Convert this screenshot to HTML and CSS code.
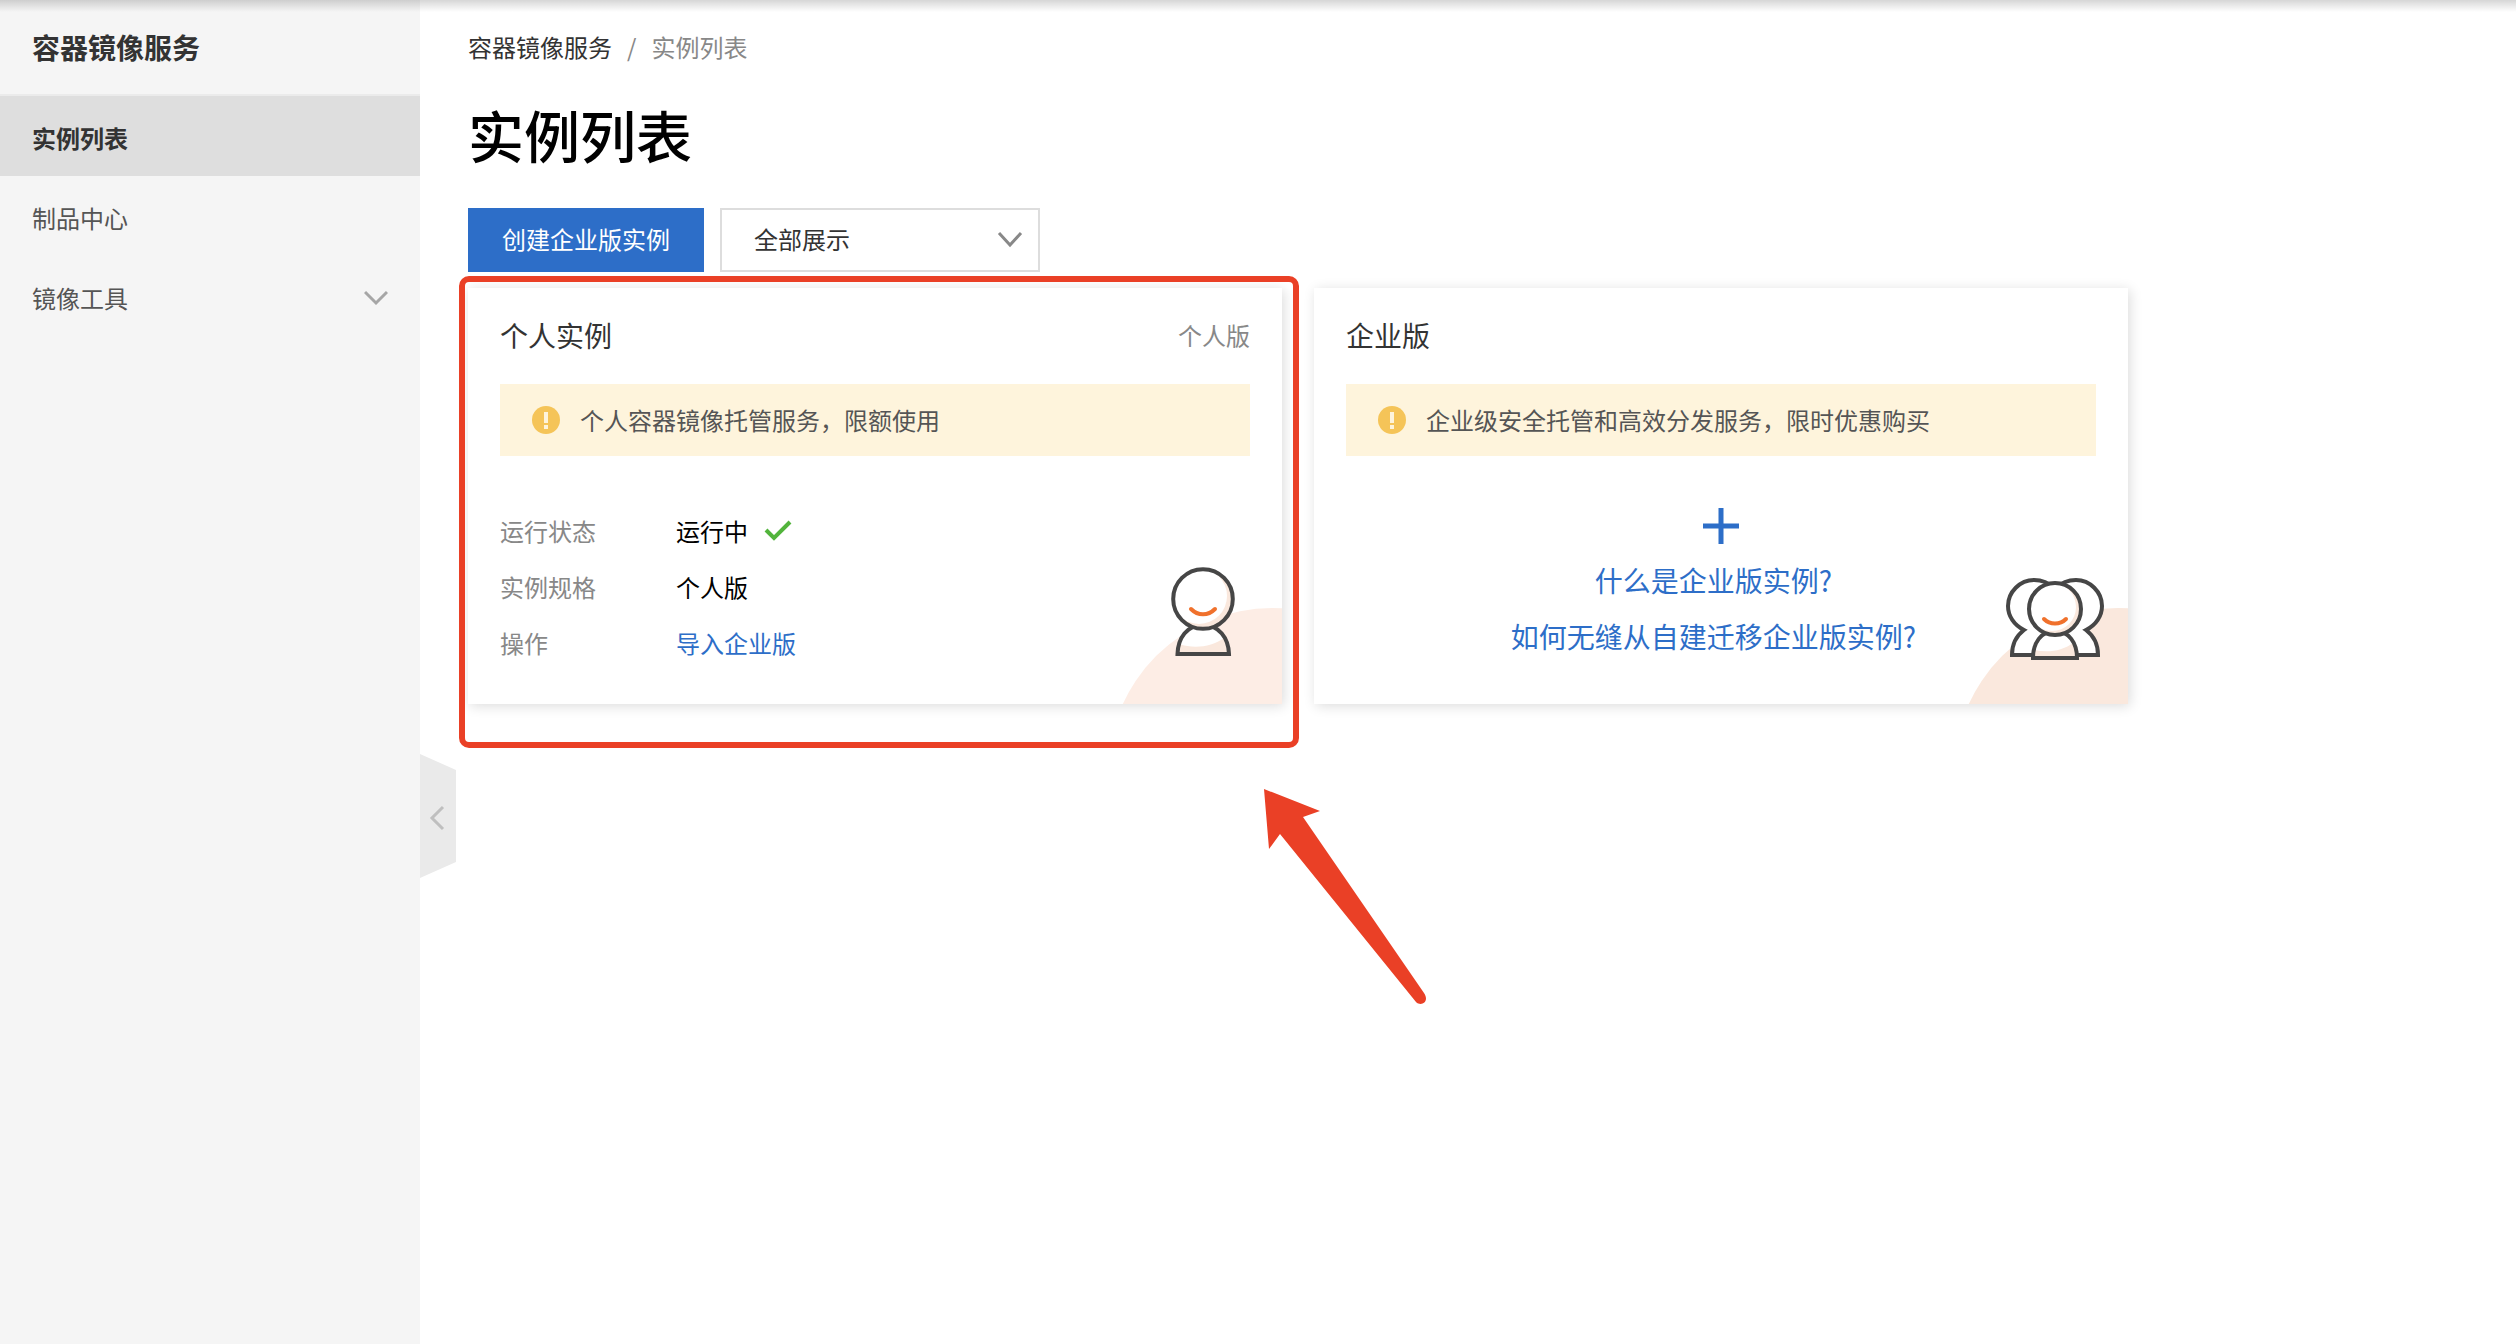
FILE: index.html
```html
<!DOCTYPE html>
<html lang="zh-CN">
<head>
  <meta charset="utf-8">
  <meta name="viewport" content="width=device-width, initial-scale=1">
  <title>容器镜像服务 - 实例列表</title>
  <link rel="stylesheet" href="styles.css">
</head>
<body>
  <div class="top-shadow"></div>
  <div class="layout">
    <aside class="sidebar">
      <h2 class="sidebar-title">容器镜像服务</h2>
      <nav class="menu">
        <a class="menu-item active" href="#" aria-current="page">实例列表</a>
        <a class="menu-item" href="#">制品中心</a>
        <a class="menu-item" href="#">镜像工具
          <svg width="24" height="16" viewBox="0 0 24 16" aria-hidden="true"><path d="M1 2l11 11L23 2" fill="none" stroke="#a6a6a6" stroke-width="3"/></svg>
        </a>
      </nav>
      <button class="collapse" type="button" aria-label="收起菜单">
        <svg width="36" height="124" viewBox="0 0 36 124" aria-hidden="true">
          <path d="M0 0l36 16v92L0 124z" fill="#eaeaea"/>
          <path d="M23 53L12 64l11 11" fill="none" stroke="#bfbfbf" stroke-width="3"/>
        </svg>
      </button>
    </aside>

    <main class="main">
      <nav class="breadcrumb" aria-label="面包屑">
        <a href="#">容器镜像服务</a><span>/</span><span>实例列表</span>
      </nav>
      <h1 class="page-title">实例列表</h1>
      <div class="toolbar">
        <button class="create" type="button">创建企业版实例</button>
        <div class="select">
          <select aria-label="展示范围"><option>全部展示</option></select>
          <svg width="26" height="18" viewBox="0 0 26 18" aria-hidden="true"><path d="M2 2l11 12L24 2" fill="none" stroke="#888" stroke-width="3"/></svg>
        </div>
      </div>

      <div class="cards">
        <div class="slot">
          <section class="card">
            <header class="card-head"><h3>个人实例</h3><span>个人版</span></header>
            <p class="notice">
              <svg width="28" height="28" viewBox="0 0 28 28" aria-hidden="true"><circle cx="14" cy="14" r="14" fill="#f5c458"/><path d="M12 6h4v11h-4zM12 19h4v4h-4z" fill="#fef4dc"/></svg>
              个人容器镜像托管服务，限额使用
            </p>
            <dl class="details">
              <dt>运行状态</dt>
              <dd>运行中
                <svg width="28" height="22" viewBox="0 0 28 22" aria-hidden="true"><path d="M2 10l8 8L26 2" fill="none" stroke="#52b43c" stroke-width="4"/></svg>
              </dd>
              <dt>实例规格</dt><dd>个人版</dd>
              <dt>操作</dt><dd><a href="#">导入企业版</a></dd>
            </dl>
            <svg class="art" width="162" height="144" viewBox="0 0 162 144" aria-hidden="true">
              <circle cx="152" cy="212" r="164" fill="#fdede5"/>
              <path d="M57 94.500V93C57 75 70 63 83 63s26 12 26 31.500z" fill="#fff"/>
              <path d="M59 84c15 5 33 3 45-6 3 5 5 10 5 16H57c0-3 1-7 2-10z" fill="#fae8dd"/>
              <path d="M57.500 94C58 78 67 65 83 65s25.500 13 26 29z" fill="none" stroke="#464646" stroke-width="4"/>
              <circle cx="83" cy="39" r="30" fill="#fae8dd"/>
              <circle cx="79" cy="36" r="28" fill="#fff"/>
              <circle cx="83" cy="39" r="29.800" fill="none" stroke="#464646" stroke-width="4"/>
              <path d="M71 49c7 7 17 7 24 0" fill="none" stroke="#f0712c" stroke-width="4" stroke-linecap="round"/>
            </svg>
          </section>
          <div class="highlight"></div>
          <svg class="arrow" width="164" height="218" viewBox="0 0 164 218" aria-hidden="true"><path d="M0 0l56 22-17 6 121 176c6 9-3 14-8 9L16 45 5 60z" fill="#ea4026"/></svg>
        </div>

        <section class="card">
          <header class="card-head"><h3>企业版</h3></header>
          <p class="notice">
            <svg width="28" height="28" viewBox="0 0 28 28" aria-hidden="true"><circle cx="14" cy="14" r="14" fill="#f5c458"/><path d="M12 6h4v11h-4zM12 19h4v4h-4z" fill="#fef4dc"/></svg>
            企业级安全托管和高效分发服务，限时优惠购买
          </p>
          <div class="promo">
            <button class="add" type="button" aria-label="创建企业版实例">
              <svg width="36" height="36" viewBox="0 0 36 36" aria-hidden="true"><path d="M18 0v36M0 18h36" stroke="#2d6ec8" stroke-width="5"/></svg>
            </button>
            <a href="#">什么是企业版实例?</a>
            <a href="#">如何无缝从自建迁移企业版实例?</a>
          </div>
          <svg class="art" width="162" height="144" viewBox="0 0 162 144" aria-hidden="true">
            <circle cx="152" cy="212" r="164" fill="#fae8dd"/>
            <g fill="#fff" stroke="#464646" stroke-width="4">
              <path d="M70 95H46c0-12 4-19 12-25C48 65 42 56 42 46c0-14 12-26 26-26 8 0 15 3 20 8v67z"/>
              <path d="M108 95h24c0-12-4-19-12-25 10-5 16-14 16-24 0-14-12-26-26-26-8 0-15 3-20 8v67z"/>
            </g>
            <path d="M67 98c0-15 8-27 22-27s22 12 22 27z" fill="#fff"/>
            <path d="M68 90c15 3 28 1 39-7 3 5 4 9 4 15H67c0-3 0-5 1-8z" fill="#fae8dd"/>
            <path d="M67 98c0-15 8-27 22-27s22 12 22 27z" fill="none" stroke="#464646" stroke-width="4"/>
            <circle cx="89" cy="49" r="26" fill="#fae8dd"/>
            <circle cx="86" cy="47" r="24" fill="#fff"/>
            <circle cx="89" cy="49" r="26" fill="none" stroke="#464646" stroke-width="4"/>
            <path d="M78 59c6 6 16 6 22 0" fill="none" stroke="#f0712c" stroke-width="4" stroke-linecap="round"/>
          </svg>
        </section>
      </div>
    </main>
  </div>
</body>
</html>
```
FILE: styles.css
```css
* {
  box-sizing: border-box;
}

body {
  margin: 0;
  background: #fff;
  color: #333;
  font: 24px/36px "Noto Sans CJK SC", sans-serif;
}

h1, h2, h3, p, dl, dd {
  margin: 0;
}

a {
  color: #2d6ec8;
  text-decoration: none;
}

button, select {
  font: inherit;
  border: 0;
  border-radius: 0;
  cursor: pointer;
}

svg {
  display: block;
  flex: none;
}

.top-shadow {
  position: absolute;
  inset: 0 0 auto;
  height: 12px;
  z-index: 2;
  background: linear-gradient(rgba(0, 0, 0, .16), rgba(0, 0, 0, .1) 35%, rgba(0, 0, 0, 0));
}

.layout {
  display: flex;
  min-height: 100vh;
}

/* Sidebar */
.sidebar {
  position: relative;
  flex: 0 0 420px;
  background: #f5f5f5;
}

.sidebar-title {
  padding: 27px 32px;
  border-bottom: 2px solid #ebebeb;
  font-size: 28px;
  line-height: 40px;
  font-weight: 700;
}

.menu-item {
  display: flex;
  align-items: center;
  justify-content: space-between;
  height: 80px;
  padding: 4px 32px 0;
  color: #555;
}

.menu-item.active {
  background: #dedede;
  color: #333;
  font-weight: 700;
}

.collapse {
  position: absolute;
  left: 100%;
  top: 754px;
  padding: 0;
  background: none;
}

/* Main column */
.main {
  flex: 1;
  min-width: 0;
  padding: 29px 48px;
}

.breadcrumb {
  display: flex;
  gap: 15px;
  color: #888;
}

.breadcrumb a {
  color: #333;
}

.page-title {
  margin: 27px 0 32px;
  color: #000;
  font-size: 56px;
  line-height: 84px;
  font-weight: 500;
}

.toolbar {
  display: flex;
  gap: 16px;
  margin-bottom: 16px;
}

.create {
  height: 64px;
  padding: 0 34px 2px;
  background: #2d6ec8;
  color: #fff;
}

.select {
  display: grid;
  align-items: center;
  width: 320px;
}

.select > * {
  grid-area: 1 / 1;
}

.select select {
  height: 64px;
  padding: 0 32px 2px;
  border: 2px solid #ddd;
  background: #fff;
  color: #333;
  appearance: none;
}

.select svg {
  justify-self: end;
  margin-right: 17px;
  pointer-events: none;
}

/* Instance cards */
.cards {
  display: grid;
  grid-template-columns: repeat(2, minmax(0, 814px));
  gap: 32px;
}

.slot {
  position: relative;
}

.card {
  position: relative;
  min-height: 416px;
  padding: 27px 32px;
  background: #fff;
  box-shadow: 2px 2px 12px rgba(0, 0, 0, .14);
}

.card-head {
  display: flex;
  align-items: center;
  justify-content: space-between;
  margin-bottom: 29px;
  color: #888;
}

.card-head h3 {
  color: #333;
  font-size: 28px;
  line-height: 40px;
  font-weight: 400;
}

.notice {
  display: flex;
  align-items: center;
  gap: 20px;
  min-height: 72px;
  padding: 0 32px;
  background: #fef4dc;
  color: #555;
}

.details {
  display: grid;
  grid-template-columns: 176px 1fr;
  row-gap: 20px;
  margin-top: 57px;
}

.details dt {
  color: #888;
}

.details dd {
  display: flex;
  align-items: center;
  gap: 16px;
  color: #000;
}

.art {
  position: absolute;
  right: 0;
  bottom: 0;
}

.promo {
  display: flex;
  flex-direction: column;
  align-items: center;
  gap: 16px;
  margin-top: 52px;
  font-size: 28px;
  line-height: 40px;
}

.promo a {
  padding-right: 15px;
}

.add {
  padding: 0;
  background: none;
}

/* Callout drawn over the first card */
.highlight {
  position: absolute;
  inset: -12px -17px -44px -9px;
  border: 6px solid #ea4026;
  border-radius: 10px;
  pointer-events: none;
}

.arrow {
  position: absolute;
  left: 796px;
  top: 501px;
  pointer-events: none;
}
```
